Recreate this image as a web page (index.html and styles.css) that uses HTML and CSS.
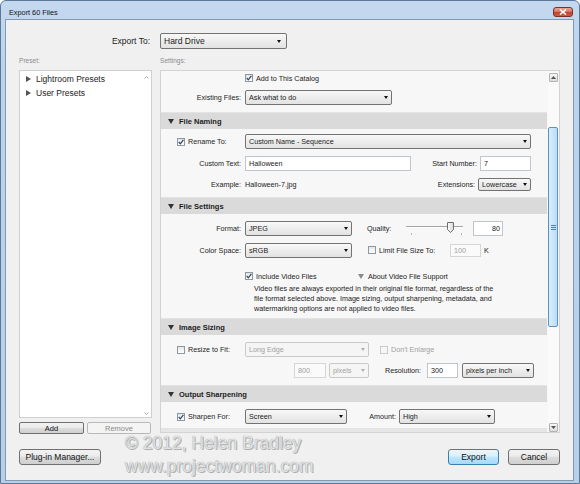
FILE: index.html
```html
<!DOCTYPE html>
<html lang="en">
<head>
    <meta charset="UTF-8">
    <meta name="viewport" content="width=device-width, initial-scale=1.0">
    <title>Export 60 Files</title>
    <link rel="stylesheet" href="styles.css">
</head>
<body>
    <div class="window">
        <div class="titlebar">
            <span class="title">Export 60 Files</span>
            <span class="close">
                <svg width="8" height="6" viewBox="0 0 8 6"><path d="M1 0.5 L7 5.5 M7 0.5 L1 5.5" stroke="#fff" stroke-width="1.6"/></svg>
            </span>
        </div>

        <div class="client">
            <div class="export-row">
                <span class="export-label">Export To:</span>
                <div class="select big"><span>Hard Drive</span><i class="arrow"></i></div>
            </div>

            <div class="main">
                <div class="presets">
                    <div class="caption">Preset:</div>
                    <div class="plist">
                        <div class="plist-items">
                            <div class="pitem"><i class="rtri"></i>Lightroom Presets</div>
                            <div class="pitem"><i class="rtri"></i>User Presets</div>
                        </div>
                        <div class="plist-scroll">
                            <svg width="5" height="3" viewBox="0 0 5 3"><path d="M0.5 2.5 L2.5 0.5 L4.5 2.5" stroke="#a8a8a8" fill="none"/></svg>
                            <svg width="5" height="3" viewBox="0 0 5 3"><path d="M0.5 0.5 L2.5 2.5 L4.5 0.5" stroke="#a8a8a8" fill="none"/></svg>
                        </div>
                    </div>
                    <div class="pbuttons">
                        <button class="btn small add">Add</button>
                        <button class="btn small remove" disabled>Remove</button>
                    </div>
                </div>

                <div class="settings">
                    <div class="caption">Settings:</div>
                    <div class="settings-box">
                        <div class="sections">
                            <!-- export location tail -->
                            <div class="section">
                                <div class="sec-body top">
                                    <div class="row h14">
                                        <span class="pad-lbl"></span>
                                        <span class="cb on"><svg width="6" height="6" viewBox="0 0 6 6"><path d="M0.7 3 L2.3 4.9 L5.4 0.8" stroke="#2f4566" stroke-width="1.2" fill="none"/></svg></span>
                                        <span>Add to This Catalog</span>
                                    </div>
                                    <div class="row h16 gap4">
                                        <span class="lbl">Existing Files:</span>
                                        <div class="select w147"><span>Ask what to do</span><i class="arrow"></i></div>
                                    </div>
                                </div>
                            </div>

                            <div class="section">
                                <div class="sec-head"><i class="dtri"></i>File Naming</div>
                                <div class="sec-body naming">
                                    <div class="row">
                                        <span class="lbl chk"><span class="cb on"><svg width="6" height="6" viewBox="0 0 6 6"><path d="M0.7 3 L2.3 4.9 L5.4 0.8" stroke="#2f4566" stroke-width="1.2" fill="none"/></svg></span>Rename To:</span>
                                        <div class="select w286"><span>Custom Name - Sequence</span><i class="arrow"></i></div>
                                    </div>
                                    <div class="row h16">
                                        <span class="lbl">Custom Text:</span>
                                        <div class="input w166">Halloween</div>
                                        <span class="lbl2 w66">Start Number:</span>
                                        <div class="input w51">7</div>
                                    </div>
                                    <div class="row h14">
                                        <span class="lbl">Example:</span>
                                        <span class="grow">Halloween-7.jpg</span>
                                        <span class="lbl2">Extensions:</span>
                                        <div class="select w53 short"><span>Lowercase</span><i class="arrow"></i></div>
                                    </div>
                                </div>
                            </div>

                            <div class="section">
                                <div class="sec-head"><i class="dtri"></i>File Settings</div>
                                <div class="sec-body filesettings">
                                    <div class="row">
                                        <span class="lbl">Format:</span>
                                        <div class="select w107"><span>JPEG</span><i class="arrow"></i></div>
                                        <span class="quality">Quality:</span>
                                        <svg class="slider" width="57" height="15" viewBox="0 0 57 15">
                                            <defs>
                                                <linearGradient id="thumb" x1="0" y1="0" x2="1" y2="0">
                                                    <stop offset="0" stop-color="#ffffff"/>
                                                    <stop offset="1" stop-color="#d6d6d6"/>
                                                </linearGradient>
                                            </defs>
                                            <line x1="0" y1="5.5" x2="57" y2="5.5" stroke="#a3a3a3"/>
                                            <line x1="0" y1="6.5" x2="57" y2="6.5" stroke="#ffffff"/>
                                            <line x1="5.5" y1="12" x2="5.5" y2="14" stroke="#b8b8b8"/>
                                            <line x1="55.5" y1="12" x2="55.5" y2="14" stroke="#b8b8b8"/>
                                            <path d="M41.5 1.5 H47.5 V8.5 L44.5 11.5 L41.5 8.5 Z" fill="url(#thumb)" stroke="#6e6e6e"/>
                                        </svg>
                                        <div class="input w30 num">80</div>
                                    </div>
                                    <div class="row h16">
                                        <span class="lbl">Color Space:</span>
                                        <div class="select w107"><span>sRGB</span><i class="arrow"></i></div>
                                        <span class="cb ml16"></span>
                                        <span class="limit">Limit File Size To:</span>
                                        <div class="input w31 off short">100</div>
                                        <span class="unit">K</span>
                                    </div>
                                    <div class="row h14 video-row">
                                        <span class="pad-lbl"></span>
                                        <span class="cb on"><svg width="6" height="6" viewBox="0 0 6 6"><path d="M0.7 3 L2.3 4.9 L5.4 0.8" stroke="#2f4566" stroke-width="1.2" fill="none"/></svg></span>
                                        <span class="video-text">Include Video Files</span>
                                        <i class="dtri grey"></i>
                                        <span>About Video File Support</span>
                                    </div>
                                    <p class="note">Video files are always exported in their original file format, regardless of the<br>file format selected above. Image sizing, output sharpening, metadata, and<br>watermarking options are not applied to video files.</p>
                                </div>
                            </div>

                            <div class="section">
                                <div class="sec-head"><i class="dtri"></i>Image Sizing</div>
                                <div class="sec-body">
                                    <div class="row">
                                        <span class="lbl chk"><span class="cb"></span>Resize to Fit:</span>
                                        <div class="select w124 off"><span>Long Edge</span><i class="arrow"></i></div>
                                        <span class="cb off ml11"></span>
                                        <span class="disabled">Don't Enlarge</span>
                                    </div>
                                    <div class="row">
                                        <div class="input w32 off ml133">800</div>
                                        <div class="select w40 off ml3"><span>pixels</span><i class="arrow"></i></div>
                                        <span class="lbl2 w52">Resolution:</span>
                                        <div class="input w31 ml3">300</div>
                                        <div class="select w72 ml4"><span>pixels per inch</span><i class="arrow"></i></div>
                                    </div>
                                </div>
                            </div>

                            <div class="section">
                                <div class="sec-head"><i class="dtri"></i>Output Sharpening</div>
                                <div class="sec-body last">
                                    <div class="row">
                                        <span class="lbl chk"><span class="cb on"><svg width="6" height="6" viewBox="0 0 6 6"><path d="M0.7 3 L2.3 4.9 L5.4 0.8" stroke="#2f4566" stroke-width="1.2" fill="none"/></svg></span>Sharpen For:</span>
                                        <div class="select w102"><span>Screen</span><i class="arrow"></i></div>
                                        <span class="lbl2 w49">Amount:</span>
                                        <div class="select w96"><span>High</span><i class="arrow"></i></div>
                                    </div>
                                </div>
                            </div>

                            <div class="sec-head cut"></div>
                        </div>

                        <div class="scrollbar">
                            <div class="sb-btn">
                                <svg width="5" height="3" viewBox="0 0 5 3"><path d="M0 3 L2.5 0 L5 3 Z" fill="#555"/></svg>
                            </div>
                            <div class="sb-thumb">
                                <svg width="5" height="5" viewBox="0 0 5 5"><path d="M0 0.5 H5 M0 2.5 H5 M0 4.5 H5" stroke="#4d7fae"/></svg>
                            </div>
                            <div class="sb-btn bottom">
                                <svg width="5" height="3" viewBox="0 0 5 3"><path d="M0 0 L2.5 3 L5 0 Z" fill="#555"/></svg>
                            </div>
                        </div>
                    </div>
                </div>
            </div>

            <div class="footer">
                <button class="btn plugin">Plug-in Manager...</button>
                <button class="btn export">Export</button>
                <button class="btn cancel">Cancel</button>
            </div>

            <div class="watermark">© 2012, Helen Bradley<br>www.projectwoman.com</div>
        </div>
    </div>
</body>
</html>
```

FILE: styles.css
```css
* {
    box-sizing: border-box;
}
body {
    margin: 0;
    font-family: "Liberation Sans", Arial, sans-serif;
    font-size: 7.2px;
    color: #222;
    background: #fff;
}
.window {
    width: 580px;
    height: 484px;
    display: flex;
    flex-direction: column;
    padding: 0 5px 2px 4px;
    border: 1px solid #5c7896;
    border-radius: 6px 6px 0 0;
    background: linear-gradient(#c4d9f0, #bcd3ec 60px, #b8cfe9);
}
.titlebar {
    height: 18px;
    flex: none;
    display: flex;
    align-items: center;
    justify-content: space-between;
    padding: 4px 1px 0 4px;
}
.title {
    font-size: 7.3px;
    color: #111;
}
.close {
    width: 20px;
    height: 10px;
    border: 1px solid #7e2f26;
    border-radius: 3px;
    background: linear-gradient(#e9a696, #d3705f 50%, #c2432f 55%, #cc5c44);
    display: flex;
    align-items: center;
    justify-content: center;
}
.client {
    flex: 1;
    position: relative;
    border: 1px solid #8399b1;
    background: #f0f0f0;
    padding: 13px 13px 0;
    display: flex;
    flex-direction: column;
}

/* export to */
.export-row {
    display: flex;
    align-items: center;
    height: 16px;
    font-size: 8.5px;
}
.export-label {
    width: 131px;
    margin-right: 10px;
    text-align: right;
}

/* main columns */
.main {
    display: flex;
    gap: 8px;
    margin-top: 5px;
}
.caption {
    height: 16px;
    line-height: 14px;
    font-size: 6.6px;
    color: #8c8c8c;
}
.presets {
    width: 133px;
}
.plist {
    height: 348px;
    background: #fff;
    border: 1px solid #cfcfcf;
    display: flex;
}
.plist-items {
    flex: 1;
    padding-top: 1px;
    font-size: 8.5px;
    color: #222;
}
.pitem {
    height: 14px;
    display: flex;
    align-items: center;
}
.rtri {
    width: 0;
    height: 0;
    border-left: 5px solid #555;
    border-top: 3.5px solid transparent;
    border-bottom: 3.5px solid transparent;
    margin: 0 5px 0 6px;
}
.plist-scroll {
    width: 10px;
    display: flex;
    flex-direction: column;
    justify-content: space-between;
    align-items: center;
    padding: 5px 0 2px;
}
.pbuttons {
    display: flex;
    gap: 3px;
    margin-top: 4px;
}

/* buttons */
.btn {
    font-family: inherit;
    color: #111;
    padding: 0;
    height: 16px;
    border: 1px solid #707070;
    border-radius: 3px;
    background: linear-gradient(#f2f2f2, #ebebeb 45%, #dddddd 50%, #cfcfcf);
    font-size: 8.5px;
}
.btn.small {
    height: 12px;
    font-size: 7.5px;
    border-radius: 2px;
}
.btn.add {
    width: 65px;
}
.btn.remove {
    width: 64px;
    color: #8a8a8a;
    border-color: #b5b9bc;
    background: #f4f4f4;
}
.btn.plugin {
    width: 82px;
    margin-right: auto;
}
.btn.export {
    width: 51px;
    border-color: #3c7fb1;
    background: linear-gradient(#eaf6fd, #d9f0fc 45%, #bee6fd 50%, #a7d9f5);
}
.btn.cancel {
    width: 52px;
}
.footer {
    display: flex;
    gap: 9px;
    margin-top: 15px;
}

/* settings panel */
.settings {
    width: 400px;
}
.settings-box {
    height: 363px;
    border: 1px solid #d3d3d3;
    background: #f7f7f7;
    display: flex;
}
.sections {
    width: 386px;
    overflow: hidden;
    display: flex;
    flex-direction: column;
    flex: none;
}
.section {
    border-bottom: 1px solid #e3e3e3;
}
.sec-head {
    height: 16px;
    background: #dadada;
    display: flex;
    align-items: center;
    padding-left: 7px;
    font-weight: bold;
    font-size: 7.5px;
    color: #1c1c1c;
    flex: none;
}
.sec-head.cut {
    background: #e6e6e6;
}
.dtri {
    width: 0;
    height: 0;
    border-top: 5px solid #333;
    border-left: 3px solid transparent;
    border-right: 3px solid transparent;
    margin-right: 5px;
}
.dtri.grey {
    border-top-color: #8a8a8a;
    margin-right: 4px;
}
.sec-body {
    padding: 7px 16px 7px 0;
}
.sec-body.top {
    padding-top: 0;
}
.sec-body.naming {
    padding-top: 5px;
    padding-bottom: 6px;
}
.sec-body.filesettings {
    padding-bottom: 4px;
}
.sec-body.last {
    padding-bottom: 4px;
}
.row {
    display: flex;
    align-items: center;
    height: 15px;
    white-space: nowrap;
}
.row + .row {
    margin-top: 6px;
}
.row.h14 {
    height: 14px;
}
.row.h16 {
    height: 16px;
}
.row.gap4 {
    margin-top: 4px;
}
.row.video-row {
    margin-top: 11px;
}
.lbl {
    width: 80px;
    margin-right: 4px;
    text-align: right;
    flex: none;
}
.lbl.chk {
    text-align: left;
    padding-left: 16px;
    display: flex;
    align-items: center;
}
.pad-lbl {
    width: 84px;
    flex: none;
}
.lbl2 {
    text-align: right;
    margin-right: 3px;
    flex: none;
}
.grow {
    flex: 1;
}
.quality {
    margin-left: 15px;
    width: 39px;
}
.limit {
    width: 71px;
}
.unit {
    margin-left: 3px;
}
.video-text {
    width: 102px;
}
.note {
    margin: 1px 0 0;
    padding-left: 93px;
    line-height: 10px;
    white-space: nowrap;
}
.disabled {
    color: #a0a0a0;
}

/* controls */
.select {
    height: 15px;
    border: 1px solid #737373;
    border-radius: 2px;
    background: linear-gradient(#f8f8f8, #e2e2e2);
    padding: 0 3px 0 3px;
    display: flex;
    align-items: center;
    flex: none;
    overflow: hidden;
}
.select.big {
    width: 127px;
    height: 16px;
    font-size: 8.5px;
    padding-right: 5px;
}
.select.short {
    height: 13px;
}
.select .arrow {
    margin-left: auto;
    width: 0;
    height: 0;
    border-top: 3px solid #111;
    border-left: 2.5px solid transparent;
    border-right: 2.5px solid transparent;
}
.select.off {
    color: #a2a2a2;
    border-color: #c9c9c9;
    background: #f5f5f5;
}
.select.off .arrow {
    border-top-color: #b0b0b0;
}
.input {
    height: 15px;
    border: 1px solid #bfc6cd;
    background: #fff;
    padding: 0 3px;
    display: flex;
    align-items: center;
    flex: none;
}
.input.num {
    justify-content: flex-end;
    padding-right: 2px;
}
.input.short {
    height: 13px;
}
.input.off {
    color: #a0a0a0;
    background: #fafafa;
    border-color: #d6d6d6;
}
.cb {
    width: 8px;
    height: 8px;
    border: 1px solid #8e98a3;
    background: linear-gradient(#e6e6e6, #fff);
    margin-right: 3px;
    flex: none;
    display: flex;
    align-items: center;
    justify-content: center;
}
.cb.off {
    border-color: #cbcbcb;
    background: #f6f6f6;
}
.slider {
    flex: none;
}

.w30 { width: 30px; }
.w31 { width: 31px; }
.w32 { width: 32px; }
.w40 { width: 40px; }
.w49 { width: 49px; }
.w51 { width: 51px; }
.w52 { width: 52px; }
.w53 { width: 53px; }
.w66 { width: 66px; }
.w72 { width: 72px; }
.w96 { width: 96px; }
.w102 { width: 102px; }
.w107 { width: 107px; }
.w124 { width: 124px; }
.w147 { width: 147px; }
.w166 { width: 166px; }
.w286 { width: 286px; }
.ml3 { margin-left: 3px; }
.ml4 { margin-left: 4px; }
.ml11 { margin-left: 11px; }
.ml16 { margin-left: 16px; }
.ml133 { margin-left: 133px; }
.slider + .input {
    margin-left: 10px;
}

/* scrollbar */
.scrollbar {
    width: 10px;
    margin: 0 1px;
    background: #fafafa;
    display: flex;
    flex-direction: column;
    align-items: center;
}
.sb-btn {
    width: 9px;
    height: 9px;
    margin-top: 2px;
    border: 1px solid #b2b2b2;
    border-radius: 1px;
    background: linear-gradient(#f6f6f6, #dedede);
    display: flex;
    align-items: center;
    justify-content: center;
}
.sb-btn.bottom {
    margin-top: auto;
}
.sb-thumb {
    width: 10px;
    height: 200px;
    margin-top: 45px;
    border: 1px solid #5b91c0;
    border-radius: 2px;
    background: linear-gradient(90deg, #dbeefb, #b9dcf5);
    display: flex;
    align-items: center;
    justify-content: center;
}

/* watermark */
.watermark {
    position: absolute;
    left: 119px;
    top: 412px;
    font-size: 17.5px;
    line-height: 23px;
    color: #e2e2e2;
    text-shadow: 0 0 1px #8c8c8c, 1px 1px 0 #b4b4b4;
    white-space: nowrap;
}
```
